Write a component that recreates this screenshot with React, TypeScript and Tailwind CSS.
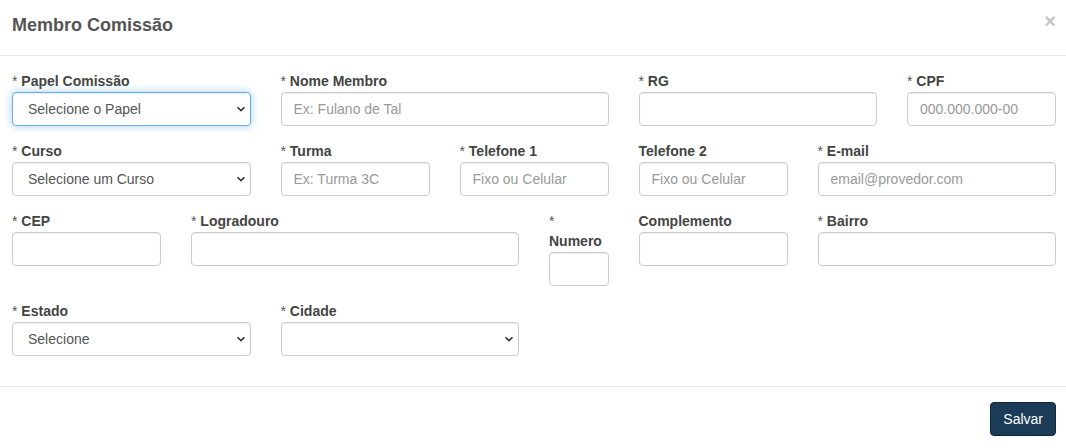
import type { ReactNode } from "react";

const font = "font-['Liberation_Sans',Arial,sans-serif]";

function Chevron() {
  return (
    <svg
      className="pointer-events-none absolute right-[5px] top-1/2 -translate-y-1/2"
      width="10"
      height="6"
      viewBox="0 0 10 6"
    >
      <path d="M1.5 1.2 L5 4.6 L8.5 1.2" fill="none" stroke="#333" strokeWidth="1.6" />
    </svg>
  );
}

function Label({ text, required = true }: { text: ReactNode; required?: boolean }) {
  return (
    <label className="block text-[14px] leading-5 font-bold text-[#444] mb-px">
      {required && <span className="font-normal text-[#555]">* </span>}
      {text}
    </label>
  );
}

function Field({
  span,
  label,
  placeholder,
  required = true,
}: {
  span: string;
  label: ReactNode;
  placeholder?: string;
  required?: boolean;
}) {
  return (
    <div className={span}>
      <Label text={label} required={required} />
      <input
        placeholder={placeholder}
        className="block w-full h-[34px] rounded-[4px] border border-[#ccc] bg-white px-3 text-[14px] text-[#555] placeholder:text-[#999] outline-none shadow-[inset_0_1px_1px_rgba(0,0,0,0.075)]"
      />
    </div>
  );
}

function Select({
  span,
  label,
  value,
  focused = false,
}: {
  span: string;
  label: string;
  value: string;
  focused?: boolean;
}) {
  return (
    <div className={span}>
      <Label text={label} />
      <div className="relative">
        <select
          defaultValue={value}
          className={
            "block w-full h-[34px] appearance-none rounded-[4px] border bg-white pl-[15px] pr-6 text-[14px] text-[#555] outline-none " +
            (focused
              ? "border-[#66afe9] shadow-[inset_0_1px_1px_rgba(0,0,0,0.075),0_0_8px_rgba(102,175,233,0.6)]"
              : "border-[#ccc] shadow-[inset_0_1px_1px_rgba(0,0,0,0.075)]")
          }
        >
          <option value={value}>{value}</option>
        </select>
        <Chevron />
      </div>
    </div>
  );
}

export default function App() {
  return (
    <div className={`w-[1066px] h-[448px] overflow-hidden bg-white ${font}`}>
      {/* Header */}
      <div className="flex items-start justify-between h-[56px] pl-3 pr-[10px] pt-[13px] border-b border-[#e5e5e5]">
        <h4 className="text-[18px] leading-6 font-bold text-[#555]">Membro Comissão</h4>
        <button className="text-[#c4c4c4] text-[20px] font-bold leading-none -mt-[2px]">×</button>
      </div>

      {/* Body */}
      <div className="pl-3 pr-[10px] pt-[15px] pb-[30px] border-b border-[#e5e5e5]">
        <div className="grid grid-cols-12 gap-x-[30px] gap-y-[15px] items-start">
          <Select span="col-span-3" label="Papel Comissão" value="Selecione o Papel" focused />
          <Field span="col-span-4" label="Nome Membro" placeholder="Ex: Fulano de Tal" />
          <Field span="col-span-3" label="RG" />
          <Field span="col-span-2" label="CPF" placeholder="000.000.000-00" />

          <Select span="col-span-3" label="Curso" value="Selecione um Curso" />
          <Field span="col-span-2" label="Turma" placeholder="Ex: Turma 3C" />
          <Field span="col-span-2" label="Telefone 1" placeholder="Fixo ou Celular" />
          <Field span="col-span-2" label="Telefone 2" placeholder="Fixo ou Celular" required={false} />
          <Field span="col-span-3" label="E-mail" placeholder="email@provedor.com" />

          <Field span="col-span-2" label="CEP" />
          <Field span="col-span-4" label="Logradouro" />
          <div className="col-span-1">
            <label className="block text-[14px] leading-5 font-bold text-[#444] mb-px">
              <span className="font-normal text-[#555]">*</span>
              <br />
              Numero
            </label>
            <input className="block w-full h-[34px] rounded-[4px] border border-[#ccc] bg-white px-3 text-[14px] outline-none shadow-[inset_0_1px_1px_rgba(0,0,0,0.075)]" />
          </div>
          <Field span="col-span-2" label="Complemento" required={false} />
          <Field span="col-span-3" label="Bairro" />

          <Select span="col-span-3" label="Estado" value="Selecione" />
          <Select span="col-span-3" label="Cidade" value="" />
        </div>
      </div>

      {/* Footer */}
      <div className="flex justify-end pl-3 pr-[10px] pt-[15px]">
        <button className="h-[34px] px-3 rounded-[4px] border border-[#10283d] bg-[#1b3b57] text-white text-[14px]">
          Salvar
        </button>
      </div>
    </div>
  );
}
